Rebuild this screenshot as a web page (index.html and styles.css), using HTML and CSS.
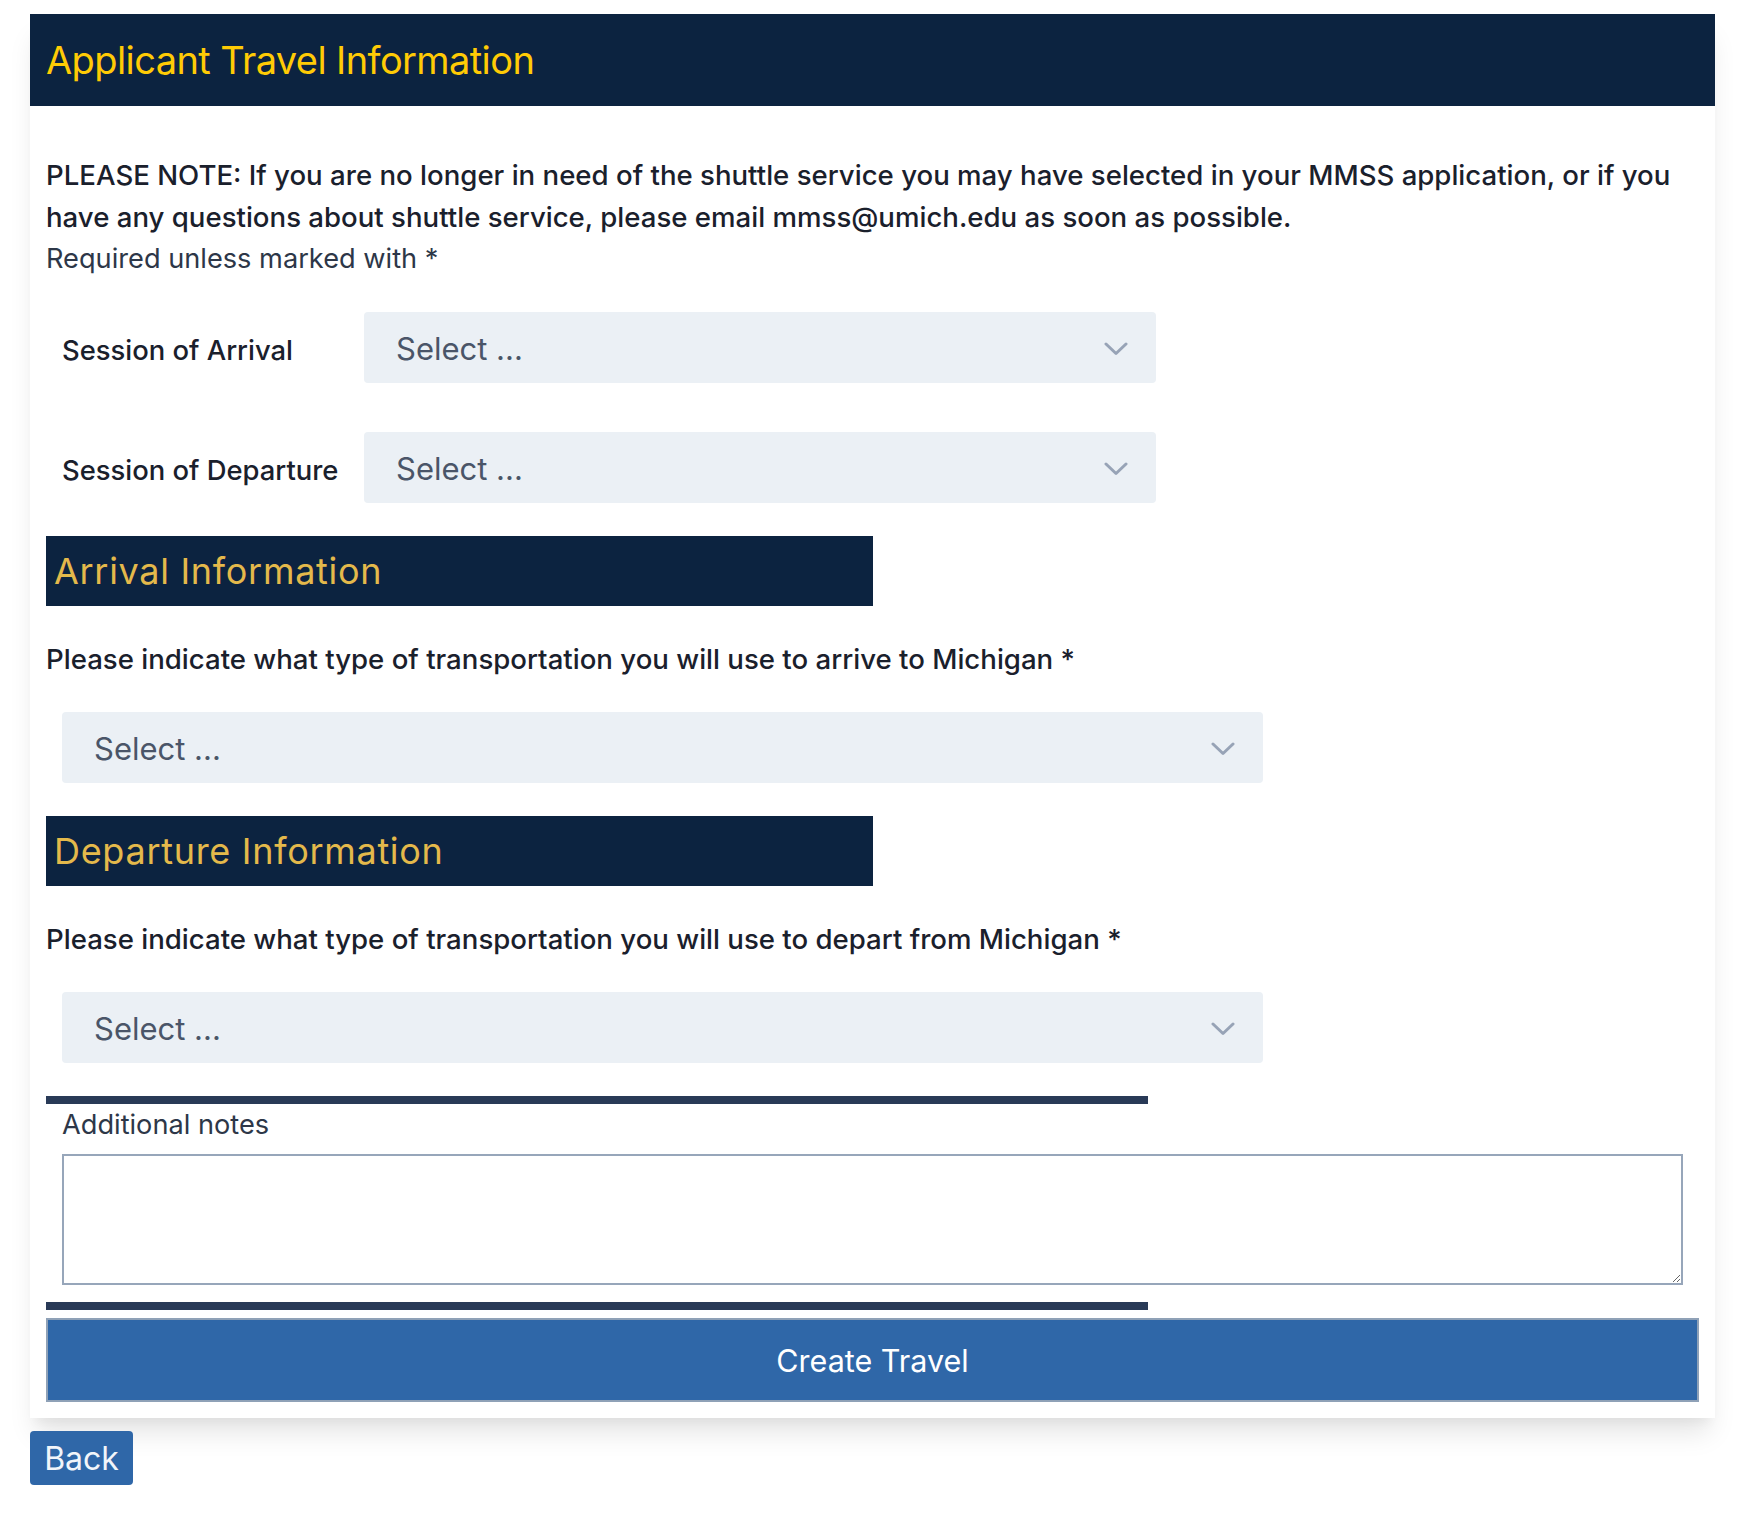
FILE: index.html
```html
<!DOCTYPE html>
<html lang="en">
<head>
<meta charset="utf-8">
<title>Applicant Travel Information</title>
<link rel="stylesheet" href="styles.css">
</head>
<body>
<main class="page">
  <section class="card">
    <header class="card-header">
      <h1 class="card-title">Applicant Travel Information</h1>
    </header>
    <form class="card-body">
      <p class="note">PLEASE NOTE: If you are no longer in need of the shuttle service you may have selected in your MMSS application, or if you have any questions about shuttle service, please email mmss@umich.edu as soon as possible.</p>
      <p class="required">Required unless marked with *</p>

      <div class="session-row first">
        <label class="session-label" for="arr-session">Session of Arrival</label>
        <div class="select-wrap session-select">
          <select id="arr-session" class="select"><option>Select ...</option></select>
          <svg class="chevron" width="24" height="14" viewBox="0 0 24 14"><polyline points="2,2 12,11.5 22,2" fill="none" stroke="#97a3b6" stroke-width="3" stroke-linecap="round" stroke-linejoin="round"/></svg>
        </div>
      </div>
      <div class="session-row">
        <label class="session-label" for="dep-session">Session of Departure</label>
        <div class="select-wrap session-select">
          <select id="dep-session" class="select"><option>Select ...</option></select>
          <svg class="chevron" width="24" height="14" viewBox="0 0 24 14"><polyline points="2,2 12,11.5 22,2" fill="none" stroke="#97a3b6" stroke-width="3" stroke-linecap="round" stroke-linejoin="round"/></svg>
        </div>
      </div>

      <h2 class="section-bar">Arrival Information</h2>
      <p class="question">Please indicate what type of transportation you will use to arrive to Michigan *</p>
      <div class="field-pad">
        <div class="select-wrap wide-select">
          <select class="select"><option>Select ...</option></select>
          <svg class="chevron" width="24" height="14" viewBox="0 0 24 14"><polyline points="2,2 12,11.5 22,2" fill="none" stroke="#97a3b6" stroke-width="3" stroke-linecap="round" stroke-linejoin="round"/></svg>
        </div>
      </div>

      <h2 class="section-bar">Departure Information</h2>
      <p class="question">Please indicate what type of transportation you will use to depart from Michigan *</p>
      <div class="field-pad">
        <div class="select-wrap wide-select">
          <select class="select"><option>Select ...</option></select>
          <svg class="chevron" width="24" height="14" viewBox="0 0 24 14"><polyline points="2,2 12,11.5 22,2" fill="none" stroke="#97a3b6" stroke-width="3" stroke-linecap="round" stroke-linejoin="round"/></svg>
        </div>
      </div>

      <hr class="rule rule-top">
      <div class="notes">
        <label class="notes-label" for="notes">Additional notes</label>
        <textarea id="notes" class="notes-input"></textarea>
      </div>
      <hr class="rule rule-bottom">
      <button type="button" class="submit">Create Travel</button>
    </form>
  </section>
  <a class="back" href="#">Back</a>
</main>
</body>
</html>
```

FILE: styles.css
```css
html, body {
  margin: 0;
  padding: 0;
  background: #ffffff;
}

body {
  font-family: Inter, "Noto Sans", "Liberation Sans", sans-serif;
  color: #1a202c;
}

.page {
  padding: 14px 23px 20px 30px;
}

.card {
  background: #ffffff;
  box-shadow: 0 20px 25px -5px rgba(0, 0, 0, 0.1), 0 10px 10px -5px rgba(0, 0, 0, 0.04);
}

.card-header {
  height: 92px;
  background: #0c2340;
  display: flex;
  align-items: center;
  padding: 0 16px;
}

.card-title {
  margin: 0;
  font-size: 38px;
  font-weight: 400;
  letter-spacing: -0.6px;
  color: #ffcb05;
}

.card-body {
  padding: 48px 16px 16px;
}

.note,
.required,
.question {
  margin: 0;
  font-size: 27.6px;
  line-height: 42px;
}

.note {
  font-weight: 500;
  color: #1a202c;
}

.required {
  font-size: 27.2px;
  font-weight: 400;
  color: #2d3748;
}

.question {
  margin-top: 32px;
  font-weight: 500;
  color: #1a202c;
}

.session-row {
  display: flex;
  align-items: center;
  margin-top: 49px;
}

.session-row.first {
  margin-top: 32px;
}

.session-label {
  width: 302px;
  padding: 5px 0 0 16px;
  font-size: 27.4px;
  font-weight: 500;
  color: #1a202c;
}

.select-wrap {
  position: relative;
  height: 71px;
}

.session-select {
  width: 792px;
}

.wide-select {
  width: 1201px;
}

.select {
  appearance: none;
  -webkit-appearance: none;
  box-sizing: border-box;
  width: 100%;
  height: 100%;
  border: none;
  border-radius: 4px;
  background: #ebf0f5;
  padding: 2px 64px 0 32px;
  font-family: Inter, "Noto Sans", "Liberation Sans", sans-serif;
  font-size: 31px;
  color: #4a5568;
  outline: none;
}

.chevron {
  position: absolute;
  right: 28px;
  top: 50%;
  margin-top: -6px;
  pointer-events: none;
}

.section-bar {
  margin: 33px 0 0;
  width: 827px;
  height: 70px;
  box-sizing: border-box;
  padding-left: 8px;
  display: flex;
  align-items: center;
  background: #0c2340;
  color: #e4b94b;
  font-size: 36px;
  font-weight: 400;
  letter-spacing: 0.7px;
}

.field-pad {
  padding: 0 16px;
  margin-top: 32px;
}

.rule {
  border: none;
  margin: 0;
  width: 1102px;
  height: 8px;
  background: #293a57;
}

.rule-top {
  margin-top: 33px;
}

.notes {
  padding: 0 16px;
}

.notes-label {
  display: block;
  font-size: 27.2px;
  line-height: 42px;
  color: #2d3748;
}

.notes-input {
  display: block;
  box-sizing: border-box;
  width: 100%;
  height: 131px;
  margin-top: 8px;
  border: 2px solid #97a6ba;
  border-radius: 0;
  font-family: Inter, "Noto Sans", "Liberation Sans", sans-serif;
  font-size: 27px;
}

.rule-bottom {
  margin-top: 17px;
}

.submit {
  display: block;
  box-sizing: border-box;
  width: 100%;
  height: 84px;
  margin-top: 8px;
  background: #2f67a8;
  border: 2px solid #8fa1b7;
  color: #ffffff;
  font-family: Inter, "Noto Sans", "Liberation Sans", sans-serif;
  font-size: 30.5px;
  font-weight: 400;
}

.back {
  display: inline-flex;
  align-items: center;
  justify-content: center;
  box-sizing: border-box;
  width: 103px;
  height: 54px;
  margin-top: 13px;
  background: #2f67a8;
  border-radius: 4px;
  color: #f2f5fa;
  font-size: 32px;
  text-decoration: none;
}
```
